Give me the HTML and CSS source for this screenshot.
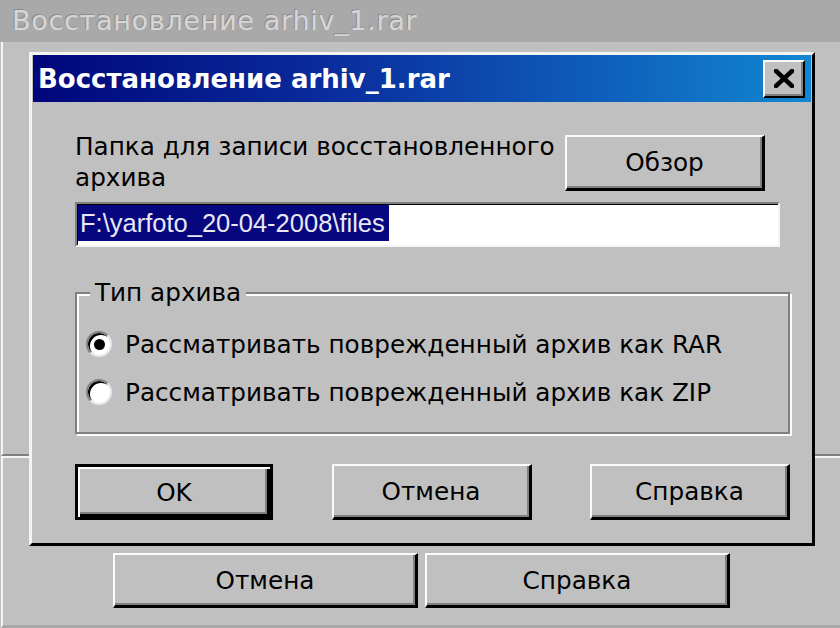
FILE: index.html
```html
<!DOCTYPE html>
<html lang="ru">
<head>
<meta charset="utf-8">
<title>Восстановление arhiv_1.rar</title>
<link rel="stylesheet" href="styles.css">
</head>
<body>
<div class="desk">
  <div class="bgwin">
    <div class="bg-title">Восстановление arhiv_1.rar</div>
    <div class="bg-upper"></div>
    <div class="bg-lower">
      <div class="bg-buttons">
        <button class="btn bg-btn">Отмена</button>
        <button class="btn bg-btn">Справка</button>
      </div>
    </div>
  </div>

  <div class="dialog">
    <div class="titlebar">
      <span class="title">Восстановление arhiv_1.rar</span>
      <button class="close" aria-label="Закрыть">
        <svg width="20" height="19" viewBox="0 0 20 19"><path d="M2 2 L18 17 M18 2 L2 17" stroke="#000" stroke-width="4.5" stroke-linecap="square"/></svg>
      </button>
    </div>
    <div class="dlg-body">
      <div class="row-folder">
        <div class="folder-label">Папка для записи восстановленного архива</div>
        <button class="btn browse">Обзор</button>
      </div>
      <div class="path-field"><span class="selected">F:\yarfoto_20-04-2008\files</span></div>
      <fieldset class="group">
        <legend>Тип архива</legend>
        <label class="radio-row"><span class="radio checked"></span><span>Рассматривать поврежденный архив как RAR</span></label>
        <label class="radio-row"><span class="radio"></span><span>Рассматривать поврежденный архив как ZIP</span></label>
      </fieldset>
      <div class="actions">
        <button class="btn default act ok">OK</button>
        <button class="btn act cancel">Отмена</button>
        <button class="btn act help">Справка</button>
      </div>
    </div>
  </div>
</div>
</body>
</html>
```
FILE: styles.css
```css
html, body {
  margin: 0;
  padding: 0;
}
body {
  width: 840px;
  height: 628px;
  overflow: hidden;
  background: #c0c0c0;
  font-family: "DejaVu Sans", "Liberation Sans", sans-serif;
  font-size: 24.7px;
  color: #000;
}
.desk {
  position: relative;
  width: 840px;
  height: 628px;
}

/* background (inactive) window */
.bgwin {
  display: flex;
  flex-direction: column;
  height: 628px;
}
.bg-title {
  height: 42px;
  flex: none;
  background: #a9a9a9;
  color: #d6d6d6;
  text-shadow: -1px -1px 0 #8c8c8c;
  padding-left: 12px;
  line-height: 42px;
  font-size: 27px;
  letter-spacing: 0.7px;
  white-space: nowrap;
}
.bg-upper {
  height: 412px;
  flex: none;
  margin-left: 1px;
  border-left: 2px solid #f4f4f4;
  border-bottom: 2px solid #808080;
}
.bg-lower {
  flex: 1;
  margin-left: 1px;
  border-left: 2px solid #f4f4f4;
  border-top: 2px solid #f4f4f4;
  border-bottom: 3px solid #a8a8a8;
}
.bg-buttons {
  display: flex;
  gap: 7px;
  padding: 95px 0 0 110px;
}
.bg-btn {
  width: 305px;
  height: 55px;
}

/* buttons */
.btn {
  font: inherit;
  color: #000;
  background: #c0c0c0;
  padding: 0;
  margin: 0;
  border-style: solid;
  border-width: 2px 3px 3px 2px;
  border-color: #fbfbfb #000 #000 #fbfbfb;
  box-shadow: inset -2px -2px 0 #808080;
}
.btn.default {
  border: 3px solid #000;
  box-shadow: inset 2px 2px 0 #fbfbfb, inset -3px -3px 0 #000, inset -5px -5px 0 #808080;
}

/* dialog window */
.dialog {
  position: absolute;
  left: 29px;
  top: 52px;
  width: 786px;
  height: 494px;
  box-sizing: border-box;
  border-style: solid;
  border-width: 3px;
  border-color: #f4f4f4 #000 #000 #f4f4f4;
  padding: 0 1px;
  background: #c0c0c0;
  display: flex;
  flex-direction: column;
}
.titlebar {
  height: 47px;
  flex: none;
  display: flex;
  align-items: center;
  padding: 0 6px 0 5px;
  background: linear-gradient(to right, #00067a 0%, #0a2f9e 40%, #1286d2 100%);
}
.title {
  flex: 1;
  color: #fff;
  font-weight: bold;
  font-size: 26px;
  white-space: nowrap;
}
.close {
  width: 42px;
  height: 38px;
  box-sizing: border-box;
  padding: 0;
  background: #c0c0c0;
  border-style: solid;
  border-width: 2px;
  border-color: #fbfbfb #000 #000 #fbfbfb;
  box-shadow: inset -2px -2px 0 #808080;
  display: flex;
  align-items: center;
  justify-content: center;
}
.close svg {
  display: block;
}

.dlg-body {
  flex: 1;
  display: flex;
  flex-direction: column;
  padding: 29px 21px 0 42px;
}
.row-folder {
  display: flex;
  align-items: flex-start;
}
.folder-label {
  width: 490px;
  line-height: 31px;
}
.browse {
  width: 200px;
  height: 56px;
  margin-top: 4px;
}
.path-field {
  margin-top: 9px;
  margin-right: 10px;
  height: 45px;
  box-sizing: border-box;
  background: #fff;
  border-style: solid;
  border-width: 2px;
  border-color: #808080 #f4f4f4 #f4f4f4 #808080;
  box-shadow: inset 1px 1px 0 #000;
  padding: 1px 0 0 1px;
}
.selected {
  display: inline-block;
  height: 36px;
  line-height: 36px;
  background: #06067e;
  color: #e8e8f4;
  font-family: "Liberation Sans", sans-serif;
  font-size: 25.5px;
  padding: 0 4px 0 2px;
}

.group {
  margin: 32px 0 0 0;
  padding: 13px 0 16px 9px;
  border: 2px solid #808080;
  box-shadow: inset 2px 2px 0 #fbfbfb, 2px 2px 0 #fbfbfb;
  min-width: 0;
}
.group legend {
  margin-left: 4px;
  padding: 0 5px;
  line-height: 28px;
  background: #c0c0c0;
}
.radio-row {
  display: flex;
  align-items: center;
  gap: 13px;
  height: 48px;
}
.radio {
  width: 26px;
  height: 26px;
  box-sizing: border-box;
  border-radius: 50%;
  background: #fff;
  border: 2px solid;
  border-color: #808080 #e8e8e8 #e8e8e8 #808080;
  box-shadow: inset 2px 2px 0 #000;
  display: flex;
  align-items: center;
  justify-content: center;
}
.radio.checked::after {
  content: "";
  width: 11px;
  height: 11px;
  border-radius: 50%;
  background: #000;
}

.actions {
  display: flex;
  justify-content: space-between;
  margin-top: 30px;
}
.act {
  width: 200px;
  height: 56px;
}
.act.ok {
  width: 198px;
}
```
